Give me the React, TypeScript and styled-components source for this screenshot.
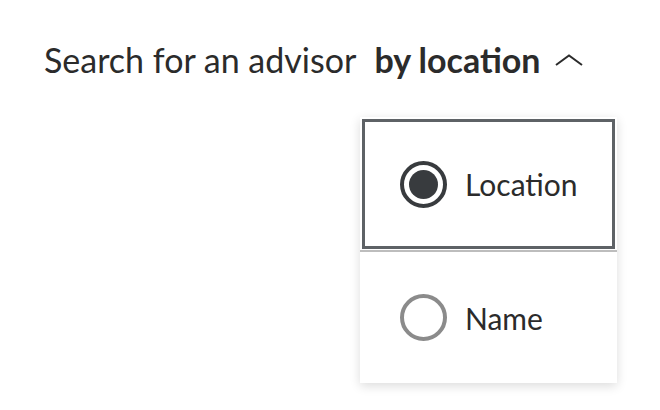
import { useState } from 'react';
import styled, { createGlobalStyle } from 'styled-components';

const GlobalStyle = createGlobalStyle`
  html, body {
    margin: 0;
    padding: 0;
    background: #ffffff;
  }
  body {
    font-family: Lato, "Noto Sans", sans-serif;
    color: #2b2b2b;
  }
`;

const Page = styled.div`
  width: 660px;
  height: 410px;
  padding: 40px 0 0 44px;
  box-sizing: border-box;
  position: relative;
`;

const Heading = styled.div`
  display: flex;
  align-items: center;
  font-size: 34px;
  line-height: 40px;
  white-space: nowrap;
`;

const Lead = styled.span`
  font-weight: 400;
`;

const Trigger = styled.button`
  display: flex;
  align-items: center;
  gap: 14px;
  margin-left: 18px;
  padding: 0;
  border: none;
  background: none;
  font: inherit;
  font-weight: 700;
  color: inherit;
  cursor: pointer;
`;

const Menu = styled.div`
  position: absolute;
  left: 360px;
  top: 117px;
  width: 257px;
  background: #ffffff;
  box-shadow: 0 3px 10px rgba(0, 0, 0, 0.14);
  display: flex;
  flex-direction: column;
`;

const Option = styled.label<{ $active: boolean }>`
  display: flex;
  align-items: center;
  gap: 18px;
  height: ${(p) => (p.$active ? '130px' : '133px')};
  box-sizing: border-box;
  padding-left: ${(p) => (p.$active ? '35px' : '40px')};
  margin: ${(p) => (p.$active ? '2px 2px 1px' : '0')};
  border: ${(p) => (p.$active ? '3px solid #5e6266' : 'none')};
  border-top: ${(p) => (p.$active ? '3px solid #5e6266' : '2px solid #bdbdbd')};
  font-size: 30px;
  cursor: pointer;
`;

const Radio = styled.span<{ $checked: boolean }>`
  width: 47px;
  height: 47px;
  box-sizing: border-box;
  border-radius: 50%;
  border: 4px solid ${(p) => (p.$checked ? '#383b3e' : '#8b8b8b')};
  display: flex;
  align-items: center;
  justify-content: center;
  flex-shrink: 0;
  &::after {
    content: '';
    width: 29px;
    height: 29px;
    border-radius: 50%;
    background: #383b3e;
    display: ${(p) => (p.$checked ? 'block' : 'none')};
  }
`;

const Chevron = () => (
  <svg width="28" height="12" viewBox="0 0 28 12" fill="none">
    <path d="M1 11 L14 1.5 L27 11" stroke="#2b2b2b" strokeWidth="2" />
  </svg>
);

const options = ['Location', 'Name'];

export default function App() {
  const [value, setValue] = useState('Location');
  return (
    <Page>
      <GlobalStyle />
      <Heading>
        <Lead>Search for an advisor</Lead>
        <Trigger>
          by {value.toLowerCase()}
          <Chevron />
        </Trigger>
      </Heading>
      <Menu>
        {options.map((opt) => (
          <Option key={opt} $active={opt === value} onClick={() => setValue(opt)}>
            <Radio $checked={opt === value} />
            {opt}
          </Option>
        ))}
      </Menu>
    </Page>
  );
}
